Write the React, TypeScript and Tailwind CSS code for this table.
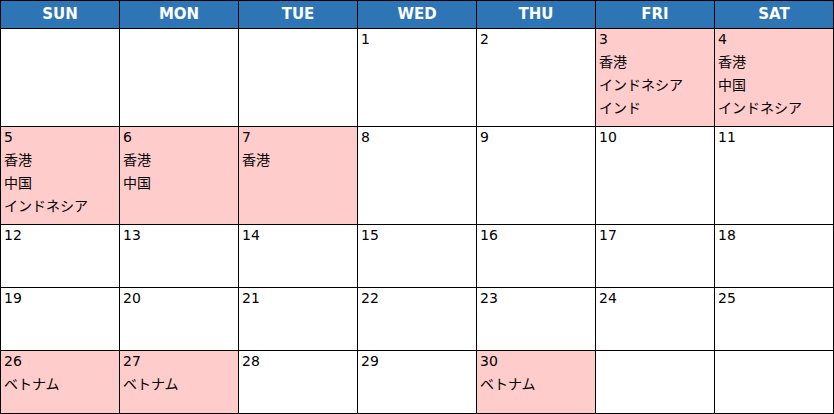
const DAYS = ["SUN", "MON", "TUE", "WED", "THU", "FRI", "SAT"];

const HOLIDAYS: Record<number, string[]> = {
  3: ["香港", "インドネシア", "インド"],
  4: ["香港", "中国", "インドネシア"],
  5: ["香港", "中国", "インドネシア"],
  6: ["香港", "中国"],
  7: ["香港"],
  26: ["ベトナム"],
  27: ["ベトナム"],
  30: ["ベトナム"],
};

// month starts on Wednesday, 30 days, 5 weeks
const FIRST_WEEKDAY = 3;
const DAYS_IN_MONTH = 30;

function buildCells() {
  const cells: (number | null)[] = [];
  for (let i = 0; i < FIRST_WEEKDAY; i++) cells.push(null);
  for (let d = 1; d <= DAYS_IN_MONTH; d++) cells.push(d);
  while (cells.length % 7 !== 0) cells.push(null);
  return cells;
}

function DayCell({ day }: { day: number | null }) {
  const holidays = day ? HOLIDAYS[day] : undefined;
  return (
    <div
      className={`overflow-hidden pl-[3px] text-[14px] leading-[23px] text-black ${
        holidays ? "bg-[#ffcccc]" : "bg-white"
      }`}
    >
      <div className="-mt-px">
        {day && <div>{day}</div>}
        {holidays?.map((name) => (
          <div key={name}>{name}</div>
        ))}
      </div>
    </div>
  );
}

export default function App() {
  const cells = buildCells();

  return (
    <div
      className="grid h-[414px] w-[834px] grid-cols-7 grid-rows-[27px_97px_97px_62px_62px_62px] gap-px bg-black p-px"
      style={{ fontFamily: '"DejaVu Sans", "Noto Sans CJK JP", sans-serif' }}
    >
      {DAYS.map((d) => (
        <div
          key={d}
          className="flex items-center justify-center bg-[#2e75b6] text-[15px] font-bold text-white"
        >
          {d}
        </div>
      ))}
      {cells.map((day, i) => (
        <DayCell key={i} day={day} />
      ))}
    </div>
  );
}
